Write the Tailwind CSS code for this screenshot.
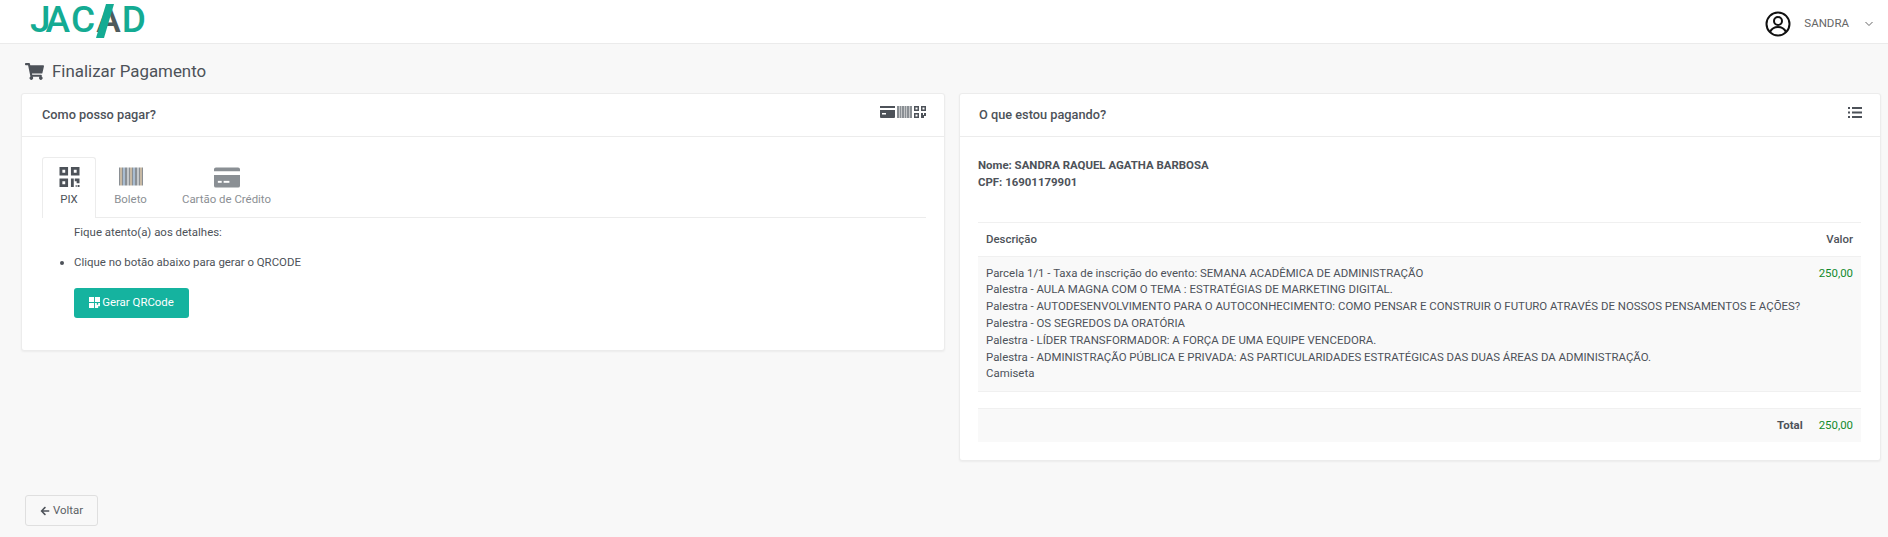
<!DOCTYPE html>
<html lang="en">
<head>
    <meta charset="UTF-8">
    <meta name="viewport" content="width=device-width, initial-scale=1.0">
    <title>Finalizar Pagamento - JACAD</title>
    <script src="https://cdn.jsdelivr.net/npm/@tailwindcss/browser@4"></script>
</head>
<body class="h-[537px] overflow-hidden bg-[#f8f8f8] font-['Roboto',sans-serif] text-[11.43px] leading-[16.8px] text-[#4d5259]">
    <!-- Header -->
    <header class="flex h-[44px] items-center justify-between border-b border-[#ebebeb] bg-white pl-[32px] pr-[15px]">
        <div class="relative h-[43px] w-[114px] text-[37px] leading-[36px] font-medium text-[#14ab93]">
            <div class="mt-[2px] flex">
                <span class="-ml-[2px] tracking-[-5px]">J</span>
                <span>A</span>
                <span class="ml-[1px]">C</span>
                <span class="ml-[1px] text-[#4f5b5c]">A</span>
                <span class="ml-[1px]">D</span>
            </div>
            <svg class="absolute left-[60px] top-0" width="30" height="42" viewBox="0 0 30 42">
                <polygon points="14,4 22,4 12,38 4,38" fill="#14ab93"/>
            </svg>
        </div>
        <div class="mt-[4px] flex items-center">
            <svg width="26" height="26" viewBox="0 0 26 26" fill="none" stroke="#111" stroke-width="2">
                <circle cx="13" cy="13" r="11.5"/>
                <circle cx="13" cy="10" r="4"/>
                <path d="M5 21c2-4 5-5 8-5s6 1 8 5"/>
            </svg>
            <span class="ml-[13px] text-[11.5px] text-[#666]">SANDRA</span>
            <svg class="ml-[16px]" width="8" height="6" viewBox="0 0 8 6" fill="none" stroke="#666"><path d="M.5 1 4 4.500 7.500 1"/></svg>
        </div>
    </header>

    <main class="px-[21px]">
        <!-- Page title -->
        <div class="flex h-[49px] items-center pl-[4px] pt-[6px]">
            <svg width="19" height="17" viewBox="0 0 576 512" fill="#4d5259">
                <path d="M528.12 301.319l47.273-208C578.806 78.301 567.391 64 551.99 64H159.208l-9.166-44.81C147.758 8.021 137.93 0 126.529 0H24C10.745 0 0 10.745 0 24v16c0 13.255 10.745 24 24 24h69.883l70.248 343.435C147.325 417.1 136 435.222 136 456c0 30.928 25.072 56 56 56s56-25.072 56-56c0-15.674-6.447-29.835-16.824-40h209.647C430.447 426.165 424 440.326 424 456c0 30.928 25.072 56 56 56s56-25.072 56-56c0-22.172-12.888-41.332-31.579-50.405l5.517-24.276c3.413-15.018-8.002-29.319-23.403-29.319H218.117l-6.545-32h293.145c11.206 0 20.92-7.754 23.403-18.681z"/>
            </svg>
            <h1 class="ml-[8px] text-[16.9px] font-normal">Finalizar Pagamento</h1>
        </div>

        <div class="grid grid-cols-[924px_922px] items-start gap-[14px]">
            <!-- Left card -->
            <section class="h-[258px] rounded-[3px] border border-[#ececec] bg-white shadow-[0_1px_2px_rgba(0,0,0,0.05)]">
                <div class="flex h-[43px] items-center justify-between border-b border-[#ececec] pl-[20px] pr-[18px]">
                    <h2 class="text-[12.75px] font-medium">Como posso pagar?</h2>
                    <div class="-mt-[6px] flex items-center gap-[2px]">
                        <svg width="15" height="12" viewBox="0 0 15 12" fill="#4d5259"><rect width="15" height="2" y="0"/><path d="M0 4h15v7a1 1 0 0 1-1 1H1a1 1 0 0 1-1-1z"/><rect x="2" y="7" width="4" height="1.500" fill="#fff"/></svg>
                        <svg width="15" height="12" viewBox="0 0 15 12"><rect width="15" height="12" fill="#c4c6c8"/><path fill="#8a8f94" d="M0 0h2v12H0zM3 0h1v12H3zM5 0h2v12H5zM8 0h1v12H8zM10 0h2v12h-2zM13 0h2v12h-2z"/></svg>
                        <svg width="12" height="12" viewBox="0 0 12 12" fill="#4d5259"><path fill-rule="evenodd" d="M0 0h5v5H0zM1.500 1.500v2h2v-2zM7 0h5v5H7zM8.500 1.500v2h2v-2zM0 7h5v5H0zM1.500 8.500v2h2v-2zM7 7h2v2h1V7h2v3h-2v2H7z"/></svg>
                    </div>
                </div>
                <div class="pl-[20px] pr-[18px] pt-[20px]">
                    <!-- Tabs -->
                    <div class="flex h-[61px] border-b border-[#ececec] text-center">
                        <div class="-mb-px flex w-[54px] flex-col items-center rounded-t-[3px] border border-b-0 border-[#ececec] bg-white pt-[9px] text-[#4d5259]">
                            <div class="h-[24px]">
                                <svg width="21" height="20" viewBox="0 0 21 21" fill="#4d5259">
                                    <path fill-rule="evenodd" d="M0 0h9v9H0zM3 3v3h3V3zM12 0h9v9h-9zM15 3v3h3V3zM0 12h9v9H0zM3 15v3h3v-3zM12 12h3v3h1v-3h5v5h-3v-2h-3v6h-3zM17 19h1v2h-1zM19 19h2v2h-2z"/>
                                </svg>
                            </div>
                            <span>PIX</span>
                        </div>
                        <div class="flex w-[69px] flex-col items-center pt-[10px] text-[#8b8f94]">
                            <div class="h-[24px]">
                                <svg width="24" height="19" viewBox="0 0 24 18">
                                    <path fill="#8a8f94" d="M0 0h1v18H0zM3 0h1v18H3zM6 0h2v18H6zM10 0h1v18h-1zM13 0h1v18h-1zM16 0h2v18h-2zM20 0h1v18h-1zM23 0h1v18h-1z"/>
                                    <path fill="#c7b9a4" d="M1 0h2v18H1zM11 0h2v18h-2zM21 0h2v18h-2z"/>
                                    <path fill="#a9bcd0" d="M4 0h2v18H4zM14 0h2v18h-2z"/>
                                    <path fill="#c5c9cc" d="M8 0h2v18H8zM18 0h2v18h-2z"/>
                                </svg>
                            </div>
                            <span>Boleto</span>
                        </div>
                        <div class="flex w-[123px] flex-col items-center pt-[10px] text-[#8b8f94]">
                            <div class="h-[24px]">
                                <svg width="26" height="21" viewBox="0 0 27 21" fill="#8a8f94">
                                    <path d="M2 0h23a2 2 0 0 1 2 2v2H0V2a2 2 0 0 1 2-2zM0 8h27v11a2 2 0 0 1-2 2H2a2 2 0 0 1-2-2z"/>
                                    <rect x="4" y="14" width="4" height="2" fill="#fff"/>
                                    <rect x="10" y="14" width="6" height="2" fill="#fff"/>
                                </svg>
                            </div>
                            <span>Cartão de Crédito</span>
                        </div>
                    </div>
                    <!-- PIX tab content -->
                    <div class="pl-[32px] pt-[6px]">
                        <p>Fique atento(a) aos detalhes:</p>
                        <ul class="mt-[13px] list-disc pl-0 marker:text-[#4d5259]">
                            <li>Clique no botão abaixo para gerar o QRCODE</li>
                        </ul>
                        <button class="mt-[17px] flex h-[30px] w-[115px] items-center justify-center rounded-[3px] bg-[#15b39f] text-white">
                            <svg width="11" height="11" viewBox="0 0 12 12" fill="#fff"><path fill-rule="evenodd" d="M0 0h5.500v5.500H0zM6.500 0H12v5.500H6.500zM0 6.500h5.500V12H0zM6.500 6.500h2v2h1.500v-2H12v3.500h-2V12H6.500z"/></svg>
                            <span class="ml-[2px]">Gerar QRCode</span>
                        </button>
                    </div>
                </div>
            </section>

            <!-- Right card -->
            <section class="h-[368px] rounded-[3px] border border-[#ececec] bg-white shadow-[0_1px_2px_rgba(0,0,0,0.05)]">
                <div class="flex h-[43px] items-center justify-between border-b border-[#ececec] pl-[19px] pr-[18px]">
                    <h2 class="text-[12.75px] font-medium">O que estou pagando?</h2>
                    <svg class="-mt-[5px]" width="14" height="11" viewBox="0 0 14 11" fill="#4d5259"><path d="M0 0h2v2H0zM4 0h10v2H4zM0 4.500h2v2H0zM4 4.500h10v2H4zM0 9h2v2H0zM4 9h10v2H4z"/></svg>
                </div>
                <div class="pl-[18px] pr-[19px] pt-[20px]">
                    <p class="font-bold">Nome: SANDRA RAQUEL AGATHA BARBOSA<br>CPF: 16901179901</p>
                    <!-- Items table -->
                    <div class="mt-[31px] border-t border-[#f0f0f0]">
                        <div class="flex h-[34px] items-center justify-between border-b border-[#f0f0f0] px-[8px] font-medium">
                            <span>Descrição</span>
                            <span>Valor</span>
                        </div>
                        <div class="flex h-[135px] justify-between border-b border-[#f0f0f0] bg-[#f9f9f9] px-[8px] pt-[8px]">
                            <div>
                                <p>Parcela 1/1 - Taxa de inscrição do evento: SEMANA ACADÊMICA DE ADMINISTRAÇÃO</p>
                                <p>Palestra - AULA MAGNA COM O TEMA : ESTRATÉGIAS DE MARKETING DIGITAL.</p>
                                <p>Palestra - AUTODESENVOLVIMENTO PARA O AUTOCONHECIMENTO: COMO PENSAR E CONSTRUIR O FUTURO ATRAVÉS DE NOSSOS PENSAMENTOS E AÇÕES?</p>
                                <p>Palestra - OS SEGREDOS DA ORATÓRIA</p>
                                <p>Palestra - LÍDER TRANSFORMADOR: A FORÇA DE UMA EQUIPE VENCEDORA.</p>
                                <p>Palestra - ADMINISTRAÇÃO PÚBLICA E PRIVADA: AS PARTICULARIDADES ESTRATÉGICAS DAS DUAS ÁREAS DA ADMINISTRAÇÃO.</p>
                                <p>Camiseta</p>
                            </div>
                            <span class="text-[#118a2c]">250,00</span>
                        </div>
                        <div class="mt-[16px] flex h-[34px] items-center justify-end border-t border-[#f0f0f0] bg-[#f9f9f9] px-[8px]">
                            <span class="font-bold">Total</span>
                            <span class="ml-[16px] text-[#118a2c]">250,00</span>
                        </div>
                    </div>
                </div>
            </section>
        </div>

        <!-- Back button -->
        <button class="ml-[4px] mt-[34px] flex h-[31px] w-[73px] items-center justify-center rounded-[3px] border border-[#dfdfdf] bg-[#f8f8f8] text-[#5c6166]">
            <svg width="10" height="10" viewBox="0 0 448 512" fill="#4d5259">
                <path d="M257.5 445.1l-22.2 22.2c-9.4 9.4-24.6 9.4-33.9 0L7 273c-9.4-9.4-9.4-24.6 0-33.9L201.4 44.7c9.4-9.4 24.6-9.4 33.9 0l22.2 22.2c9.5 9.5 9.3 25-.4 34.3L136.6 216H424c13.3 0 24 10.7 24 24v32c0 13.3-10.7 24-24 24H136.6l120.5 114.8c9.8 9.3 10 24.8.4 34.3z"/>
            </svg>
            <span class="ml-[3px]">Voltar</span>
        </button>
    </main>
</body>
</html>
